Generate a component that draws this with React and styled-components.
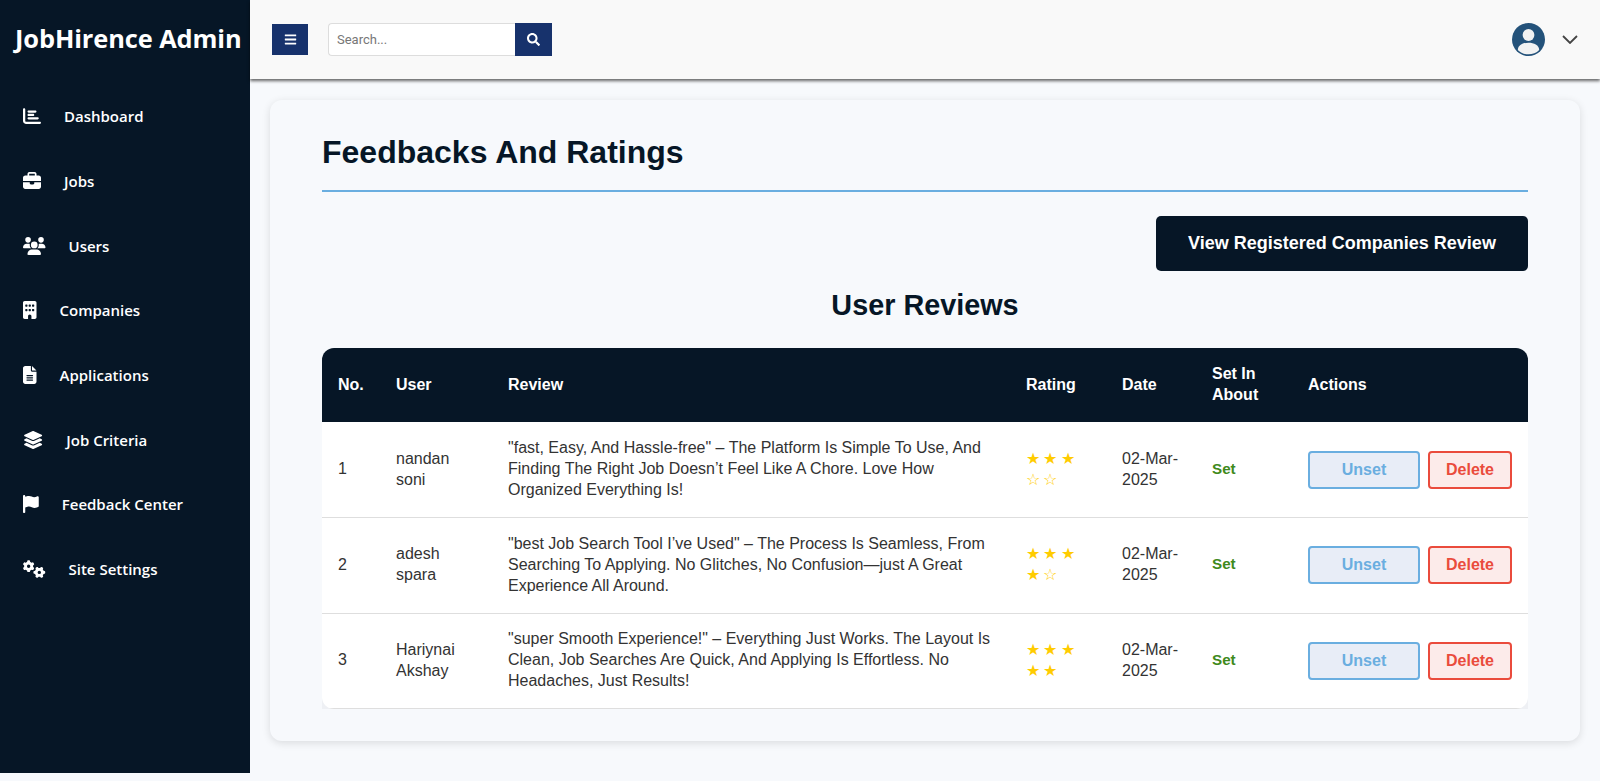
import React from "react";
import styled, { createGlobalStyle } from "styled-components";
import { FaBars, FaSearch } from "react-icons/fa";
import {
  FaChartBar,
  FaBriefcase,
  FaUsers,
  FaBuilding,
  FaFileLines,
  FaLayerGroup,
  FaFlag,
  FaGears,
} from "react-icons/fa6";

const GlobalStyle = createGlobalStyle`
  * { box-sizing: border-box; }
  html, body { margin: 0; padding: 0; background: #f7f9fc; }
  body { font-family: "Liberation Sans", Arial, sans-serif; color: #333; overflow: hidden; }
`;

const Layout = styled.div`
  display: flex;
  align-items: flex-start;
  height: 781px;
`;

const Sidebar = styled.aside`
  width: 250px;
  height: 773px;
  flex-shrink: 0;
  background: #061626;
  color: #fff;
  font-family: "Open Sans", "Noto Sans", sans-serif;
`;

const Brand = styled.div`
  height: 83.9px;
  padding: 21px 0 0 15px;
  font-size: 25.4px;
  line-height: 35px;
  font-weight: 700;
  letter-spacing: -0.1px;
  white-space: nowrap;
`;

const NavList = styled.nav`
  display: flex;
  flex-direction: column;
  padding-left: 23px;
`;

const NavItem = styled.a`
  display: flex;
  align-items: center;
  gap: 23px;
  height: 64.7px;
  color: #fff;
  font-size: 15px;
  font-weight: 600;
  svg {
    flex-shrink: 0;
    width: ${(props) => props.$iconWidth}px;
    height: 18px;
  }
`;

const Main = styled.div`
  flex: 1;
  min-width: 0;
`;

const TopBar = styled.header`
  height: 79px;
  background: #f9f9f9;
  box-shadow: 0 2px 3px rgba(0, 0, 0, 0.6);
  display: flex;
  align-items: center;
  padding: 0 22px 1px 22px;
  position: relative;
`;

const MenuButton = styled.button`
  width: 36px;
  height: 31px;
  border: 0;
  padding: 0;
  background: #17326c;
  color: #fff;
  font-size: 13px;
  display: flex;
  align-items: center;
  justify-content: center;
`;

const SearchForm = styled.form`
  display: flex;
  margin-left: 20px;
`;

const SearchInput = styled.input`
  width: 187px;
  height: 33px;
  border: 1px solid #ddd;
  border-right: 0;
  border-radius: 4px 0 0 4px;
  background: #fff;
  padding: 0 8px;
  font-family: Roboto, sans-serif;
  font-size: 13px;
  &::placeholder {
    color: #777;
    opacity: 1;
  }
`;

const SearchButton = styled.button`
  width: 37px;
  height: 33px;
  border: 0;
  padding: 0;
  background: #17326c;
  color: #fff;
  font-size: 13px;
  display: flex;
  align-items: center;
  justify-content: center;
`;

const Profile = styled.div`
  margin-left: auto;
  display: flex;
  align-items: center;
  gap: 17px;
  color: #333;
`;

const Content = styled.main`
  padding: 21px 20px 0;
`;

const Card = styled.section`
  height: 641px;
  padding: 30px 52px 0;
  background: #f7f9fc;
  border-radius: 12px;
  box-shadow: 0 2px 8px rgba(0, 0, 0, 0.12);
`;

const Title = styled.h1`
  margin: 0;
  height: 62px;
  padding-top: 4px;
  border-bottom: 2px solid #6aaee0;
  color: #061626;
  font-size: 32px;
  line-height: 37px;
  font-weight: 700;
`;

const ButtonRow = styled.div`
  display: flex;
  justify-content: flex-end;
  margin-top: 24px;
`;

const ReviewToggle = styled.button`
  width: 372px;
  height: 55px;
  border: 0;
  border-radius: 5px;
  background: #061626;
  color: #fff;
  font-family: inherit;
  font-size: 18px;
  font-weight: 700;
`;

const SubTitle = styled.h2`
  margin: 18px 0 0;
  text-align: center;
  color: #061626;
  font-size: 28.8px;
  line-height: 33px;
  font-weight: 700;
`;

const TableWrap = styled.div`
  margin-top: 26px;
  border-radius: 12px 12px 0 0;
  background: #eef0f4;
`;

const TableClip = styled.div`
  border-radius: 12px;
  overflow: hidden;
  background: #fff;
`;

const Table = styled.table`
  width: 100%;
  table-layout: fixed;
  border-collapse: collapse;
  font-size: 16px;
  line-height: 21px;
`;

const HeadCell = styled.th`
  width: ${(props) => props.$width}px;
  height: 74px;
  padding: 0 16px 2px;
  background: #061626;
  color: #fff;
  text-align: left;
  font-weight: 700;
`;

const Row = styled.tr`
  height: ${(props) => props.$height}px;
  border-bottom: 1px solid #dedede;
`;

const Cell = styled.td`
  padding: 0 16px 2px;
  vertical-align: middle;
  color: #333;
`;

const Star = styled.span`
  display: inline-block;
  width: 17.4px;
  color: #ffcc00;
  font-size: 16px;
`;

const SetLabel = styled.span`
  display: block;
  margin-top: -1px;
  color: #3f8a1c;
  font-weight: 700;
  font-size: 15.2px;
`;

const Actions = styled.div`
  display: flex;
  gap: 8px;
  margin-top: 2px;
`;

const ActionButton = styled.button`
  width: ${(props) => props.$width}px;
  height: 38px;
  padding: 0;
  border: 2px solid ${(props) => props.$color};
  border-radius: 4px;
  background: ${(props) => props.$bg};
  color: ${(props) => props.$color};
  font-family: inherit;
  font-size: 16px;
  font-weight: 700;
`;

const navItems = [
  { label: "Dashboard", icon: FaChartBar, width: 18 },
  { label: "Jobs", icon: FaBriefcase, width: 18 },
  { label: "Users", icon: FaUsers, width: 22.5 },
  { label: "Companies", icon: FaBuilding, width: 13.5 },
  { label: "Applications", icon: FaFileLines, width: 13.5 },
  { label: "Job Criteria", icon: FaLayerGroup, width: 20.25 },
  { label: "Feedback Center", icon: FaFlag, width: 15.75 },
  { label: "Site Settings", icon: FaGears, width: 22.5 },
];

const reviews = [
  {
    id: 1,
    user: "nandan soni",
    review:
      '"fast, Easy, And Hassle-free" – The Platform Is Simple To Use, And Finding The Right Job Doesn’t Feel Like A Chore. Love How Organized Everything Is!',
    rating: 3,
    height: 95.6,
  },
  {
    id: 2,
    user: "adesh spara",
    review:
      '"best Job Search Tool I’ve Used" – The Process Is Seamless, From Searching To Applying. No Glitches, No Confusion—just A Great Experience All Around.',
    rating: 4,
    height: 95.6,
  },
  {
    id: 3,
    user: "Hariynai Akshay",
    review:
      '"super Smooth Experience!" – Everything Just Works. The Layout Is Clean, Job Searches Are Quick, And Applying Is Effortless. No Headaches, Just Results!',
    rating: 5,
    height: 95.4,
  },
];

const Avatar = () => (
  <svg width="33" height="33" viewBox="0 0 33 33">
    <circle cx="16.5" cy="16.5" r="16.5" fill="#24527a" />
    <circle cx="16.5" cy="12" r="5.9" fill="#f2f2f2" />
    <path d="M5.8 27 C6 22 11 19.7 16.5 19.7 C22 19.7 27 22 27.2 27 C24.5 30 20.5 31.3 16.5 31.3 C12.5 31.3 8.5 30 5.8 27 Z" fill="#f2f2f2" />
  </svg>
);

const Chevron = () => (
  <svg width="16" height="9" viewBox="0 0 16 9" fill="none" stroke="#444" strokeWidth="1.8">
    <path d="M1 1 L8 8 L15 1" />
  </svg>
);

const App = () => (
  <Layout>
    <GlobalStyle />
    <Sidebar>
      <Brand>JobHirence Admin</Brand>
      <NavList>
        {navItems.map(({ label, icon: Icon, width }) => (
          <NavItem key={label} $iconWidth={width}>
            <Icon />
            <span>{label}</span>
          </NavItem>
        ))}
      </NavList>
    </Sidebar>
    <Main>
      <TopBar>
        <MenuButton type="button">
          <FaBars />
        </MenuButton>
        <SearchForm>
          <SearchInput placeholder="Search..." />
          <SearchButton type="button">
            <FaSearch />
          </SearchButton>
        </SearchForm>
        <Profile>
          <Avatar />
          <Chevron />
        </Profile>
      </TopBar>
      <Content>
        <Card>
          <Title>Feedbacks And Ratings</Title>
          <ButtonRow>
            <ReviewToggle type="button">View Registered Companies Review</ReviewToggle>
          </ButtonRow>
          <SubTitle>User Reviews</SubTitle>
          <TableWrap>
            <TableClip>
              <Table>
                <thead>
                  <tr>
                    <HeadCell $width={58}>No.</HeadCell>
                    <HeadCell $width={112}>User</HeadCell>
                    <HeadCell $width={518}>Review</HeadCell>
                    <HeadCell $width={96}>Rating</HeadCell>
                    <HeadCell $width={90}>Date</HeadCell>
                    <HeadCell $width={96}>Set In About</HeadCell>
                    <HeadCell>Actions</HeadCell>
                  </tr>
                </thead>
                <tbody>
                  {reviews.map((item) => (
                    <Row key={item.id} $height={item.height}>
                      <Cell>{item.id}</Cell>
                      <Cell>{item.user}</Cell>
                      <Cell>{item.review}</Cell>
                      <Cell>
                        {[1, 2, 3, 4, 5].map((n) => (
                          <Star key={n}>{n <= item.rating ? "★" : "☆"}</Star>
                        ))}
                      </Cell>
                      <Cell>02-Mar-2025</Cell>
                      <Cell>
                        <SetLabel>Set</SetLabel>
                      </Cell>
                      <Cell>
                        <Actions>
                          <ActionButton type="button" $width={112} $color="#6aaee0" $bg="#e8edf7">
                            Unset
                          </ActionButton>
                          <ActionButton type="button" $width={84} $color="#ea4b3c" $bg="#fcebea">
                            Delete
                          </ActionButton>
                        </Actions>
                      </Cell>
                    </Row>
                  ))}
                </tbody>
              </Table>
            </TableClip>
          </TableWrap>
        </Card>
      </Content>
    </Main>
  </Layout>
);

export default App;
